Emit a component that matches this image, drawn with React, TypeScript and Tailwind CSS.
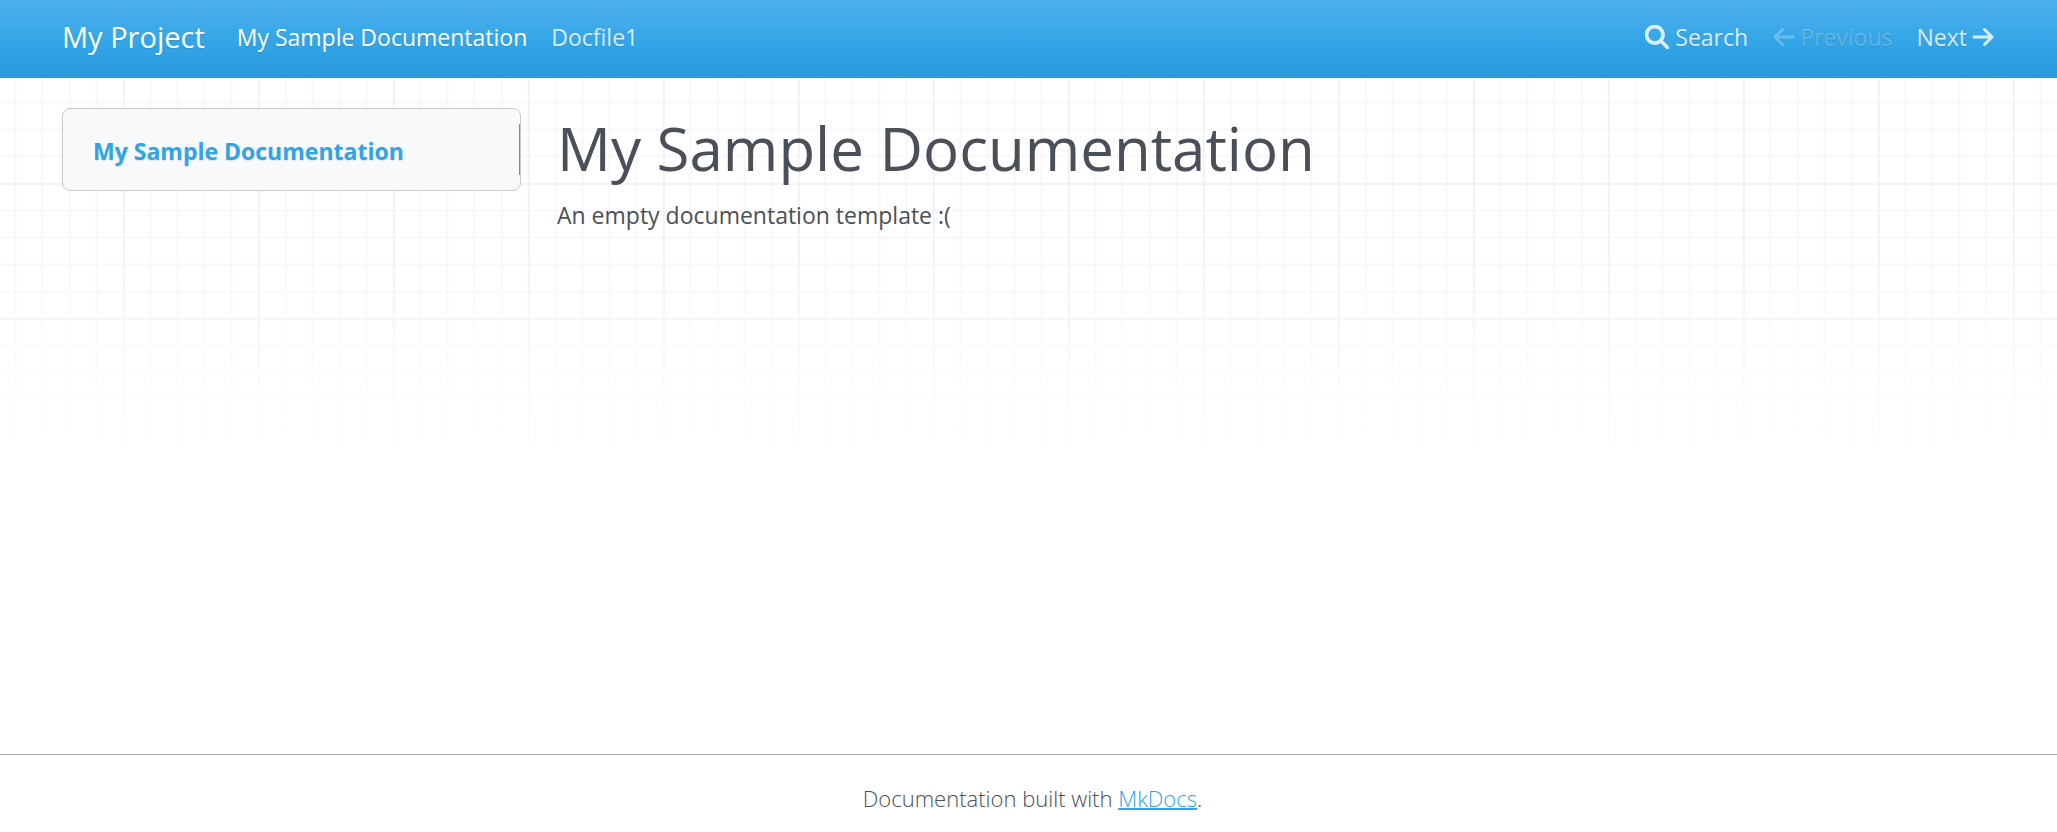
import { FaArrowLeft, FaArrowRight, FaMagnifyingGlass } from "react-icons/fa6";

function Backdrop() {
  return (
    <svg className="absolute inset-x-0 top-0 -z-10 h-[480px] w-full" aria-hidden="true">
      <defs>
        <pattern id="minor" width="27" height="27" patternUnits="userSpaceOnUse" x="14" y="20">
          <path d="M0 1.5H27M1.5 0V27" stroke="#f8f8f8" strokeWidth="2" />
        </pattern>
        <pattern id="major" width="135" height="135" patternUnits="userSpaceOnUse" x="122" y="47">
          <path d="M0 2H135M2 0V135" stroke="#f3f3f3" strokeWidth="2" />
        </pattern>
        <linearGradient id="fade" x1="0" y1="0" x2="0" y2="1">
          <stop offset="0.5" stopColor="#fff" stopOpacity="0" />
          <stop offset="0.97" stopColor="#fff" />
        </linearGradient>
      </defs>
      <rect width="100%" height="100%" fill="url(#minor)" />
      <rect width="100%" height="100%" fill="url(#major)" />
      <rect width="100%" height="100%" fill="url(#fade)" />
    </svg>
  );
}

export default function App() {
  return (
    <div className="relative isolate flex min-h-screen flex-col bg-white font-['Open_Sans','Noto_Sans',sans-serif] text-[23px] leading-9 text-[#495057]">
      <Backdrop />
      <header className="bg-linear-to-b from-[#4db1eb] via-[#2fa4e7] via-60% to-[#2b99d9] px-[62px] text-white/80 [text-shadow:0_1px_1px_rgba(0,0,0,0.1)]">
        <nav className="flex h-[78px] items-center pb-1 whitespace-nowrap">
          <a href="#" className="mr-8 text-[29px] text-white">My Project</a>
          <div className="flex gap-6">
            <a href="#" className="text-white">My Sample Documentation</a>
            <a href="#docfile1">Docfile1</a>
          </div>
          <div className="ml-auto flex gap-6">
            <button type="button" className="flex items-center gap-1.5 [text-shadow:inherit]">
              <FaMagnifyingGlass className="size-6 stroke-[16px]" />
              Search
            </button>
            <a aria-disabled="true" className="flex items-center gap-1 text-white/25">
              <FaArrowLeft className="size-6" />
              Previous
            </a>
            <a href="#docfile1" className="flex items-center gap-1">
              Next
              <FaArrowRight className="size-6" />
            </a>
          </div>
        </nav>
      </header>
      <div className="grid grid-cols-[459fr_1438fr] items-start gap-9 px-[62px] pt-[30px]">
        <aside className="rounded-lg border border-[#c8cacc] bg-[#f8f9fb] py-[15px]">
          <a
            href="#"
            className="block border-r border-[#2fa4e7] px-[30px] pt-[9px] pb-1.5 font-bold text-[#2fa4e7] [text-shadow:0_1px_1px_rgba(0,0,0,0.1)]"
          >
            My Sample Documentation
          </a>
        </aside>
        <main>
          <h1 className="mb-[9px] text-[60px] leading-20">My Sample Documentation</h1>
          <p>An empty documentation template :(</p>
        </main>
      </div>
      <footer className="mt-auto border-t border-[#a4a7ab] pt-[25px] pb-4 pl-2 text-center text-[22px] leading-9 font-light">
        Documentation built with{" "}
        <a href="https://www.mkdocs.org/" className="text-[#2fa4e7] underline decoration-2">
          MkDocs
        </a>
        .
      </footer>
    </div>
  );
}
